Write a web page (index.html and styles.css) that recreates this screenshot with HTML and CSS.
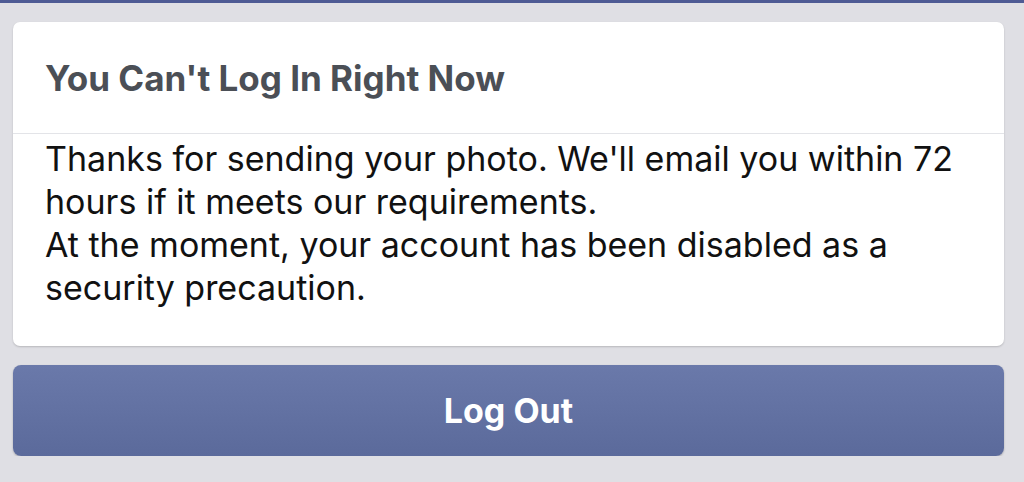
FILE: index.html
```html
<!DOCTYPE html>
<html lang="en">
<head>
  <meta charset="UTF-8" />
  <meta name="viewport" content="width=device-width, initial-scale=1" />
  <title>Account Disabled</title>
  <link rel="stylesheet" href="styles.css">
</head>
<body>

<!-- Top bar edge -->
<div class="top-edge"></div>

<div class="page">
  <!-- Notice card -->
  <div class="notice-card">
    <div class="notice-header">
      <h1>You Can't Log In Right Now</h1>
    </div>
    <div class="notice-body">
      <p>Thanks for sending your photo. We'll email you within 72 hours if it meets our requirements.</p>
      <p>At the moment, your account has been disabled as a security precaution.</p>
    </div>
  </div>

  <button class="logout-btn">Log Out</button>
</div>

</body>
</html>
```

FILE: styles.css
```css
body {
  margin: 0;
  background-color: #dfdfe4;
  font-family: Inter, "Noto Sans", sans-serif;
  -webkit-font-smoothing: antialiased;
}

.top-edge {
  height: 3px;
  background-color: #4e5b94;
}

.page {
  padding: 19px 20px 0 13px;
  display: flex;
  flex-direction: column;
  gap: 19px;
}

.notice-card {
  background-color: #fff;
  border-radius: 7px;
  box-shadow: 0 1px 2px rgba(0, 0, 0, 0.18);
}

.notice-header {
  height: 111px;
  display: flex;
  align-items: center;
  padding: 0 32px;
  border-bottom: 1px solid #e3e4e8;
}

.notice-header h1 {
  margin: 0;
  font-size: 35px;
  font-weight: 700;
  color: #4b4f56;
}

.notice-body {
  padding: 3px 32px 37px;
}

.notice-body p {
  margin: 0;
  font-size: 34px;
  line-height: 43px;
  color: #111;
}

.logout-btn {
  height: 91px;
  border: none;
  border-radius: 8px;
  background: linear-gradient(#6a79aa, #5b6a9b);
  box-shadow: 0 1px 2px rgba(0, 0, 0, 0.25);
  color: #fff;
  font-family: Inter, "Noto Sans", sans-serif;
  font-size: 34px;
  font-weight: 700;
  cursor: pointer;
}
```
